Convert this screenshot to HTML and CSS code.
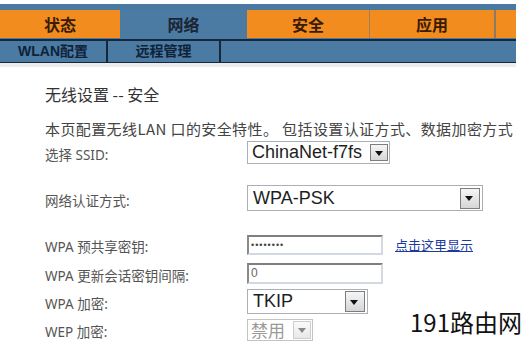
FILE: index.html
```html
<!DOCTYPE html>
<html lang="zh-CN">
<head>
<meta charset="UTF-8" />
<meta name="viewport" content="width=device-width, initial-scale=1" />
<title>无线设置 -- 安全</title>
<link rel="stylesheet" href="styles.css">
</head>
<body>

<div class="nav">
  <div class="tabs">
    <div class="tab">状态</div>
    <div class="tab active">网络</div>
    <div class="tab">安全</div>
    <div class="tab sep">应用</div>
    <div class="tab sep tail"></div>
  </div>
  <div class="subtabs">
    <div class="subtab">WLAN配置</div>
    <div class="subtab wide">远程管理</div>
  </div>
</div>
<div class="shade"></div>

<div class="content">
  <h2 class="title">无线设置 -- 安全</h2>
  <p class="desc">本页配置无线LAN 口的安全特性。 包括设置认证方式、数据加密方式</p>

  <div class="row row-ssid">
    <label class="field-label">选择 SSID:</label>
    <div class="select ssid"><span class="val">ChinaNet-f7fs</span><span class="arrow"></span></div>
  </div>

  <div class="row row-auth">
    <label class="field-label">网络认证方式:</label>
    <div class="select auth"><span class="val">WPA-PSK</span><span class="arrow"></span></div>
  </div>

  <div class="row row-psk">
    <label class="field-label">WPA 预共享密钥:</label>
    <div class="input pass">&bull;&bull;&bull;&bull;&bull;&bull;&bull;&bull;</div>
    <a href="#" class="show-link">点击这里显示</a>
  </div>

  <div class="row row-interval">
    <label class="field-label">WPA 更新会话密钥间隔:</label>
    <div class="input num">0</div>
  </div>

  <div class="row row-tkip">
    <label class="field-label">WPA 加密:</label>
    <div class="select tkip"><span class="val">TKIP</span><span class="arrow"></span></div>
  </div>

  <div class="row row-wep">
    <label class="field-label">WEP 加密:</label>
    <div class="select wep disabled"><span class="val">禁用</span><span class="arrow"></span></div>
  </div>
</div>

<div class="watermark">191路由网</div>

</body>
</html>
```

FILE: styles.css
```css
body {
  margin: 0;
  background: #fff;
  font-family: "Noto Sans", "Noto Sans CJK SC", sans-serif;
  position: relative;
  height: 354px;
  overflow: hidden;
}

/* top navigation */
.nav {
  width: 516px;
  margin-top: 4px;
  background: #4b7ba3;
  border-top: 6px solid #4a79a1;
}
.tabs {
  display: flex;
  height: 28px;
  border-bottom: 1px solid #4b7ba3;
}
.tab {
  width: 120px;
  background: #f28c1e;
  color: #3a1b08;
  font-family: "Noto Sans CJK SC", sans-serif;
  font-weight: bold;
  font-size: 16px;
  line-height: 28px;
  text-align: center;
  box-sizing: border-box;
}
.tab.active {
  width: 127px;
  background: #4b7ba3;
  color: #1b2533;
}
.tab:nth-child(3) { width: 122px; }
.tab.sep {
  width: 125px;
  border-left: 1px solid #a0805a;
}
.tab.tail {
  width: 22px;
  border-left: 2px solid #8a7a66;
}
.subtabs {
  display: flex;
  height: 21px;
  border-top: 2px solid #16273b;
  border-bottom: 1px solid #16273b;
}
.subtab {
  width: 108px;
  border-right: 2px solid #16273b;
  box-sizing: border-box;
  color: #0f2238;
  font-family: "Liberation Sans", "Noto Sans CJK SC", sans-serif;
  font-weight: bold;
  font-size: 14px;
  line-height: 21px;
  text-align: center;
}
.subtab.wide { width: 113px; }
.shade {
  width: 516px;
  height: 4px;
  background: #ececec;
}

/* form */
.content {
  padding: 17px 0 0 45px;
}
.title {
  margin: 0;
  font-family: "Noto Sans CJK SC", sans-serif;
  font-weight: normal;
  font-size: 16px;
  line-height: 20px;
  color: #333;
}
.desc {
  margin: 15px 0 0;
  font-family: "Noto Sans CJK SC", sans-serif;
  font-size: 15px;
  letter-spacing: 0.4px;
  line-height: 20px;
  color: #444;
  white-space: nowrap;
}
.row {
  display: flex;
  align-items: center;
}
.row-ssid { margin-top: 2px; }
.row-auth { margin-top: 21px; }
.row-psk { margin-top: 22px; }
.row-interval { margin-top: 6px; }
.row-tkip { margin-top: 4px; }
.row-wep { margin-top: 4px; }

.field-label {
  width: 202px;
  padding-top: 5px;
  font-size: 13.5px;
  line-height: 18px;
  color: #555;
}

.select {
  display: flex;
  align-items: center;
  justify-content: space-between;
  box-sizing: border-box;
  border: 1px solid #a9b0b8;
  background: #fff;
  padding: 0 1px 0 5px;
  font-family: "Liberation Sans", "Noto Sans CJK SC", sans-serif;
  font-size: 18px;
  color: #1e1e1e;
  white-space: nowrap;
}
.select .arrow {
  position: relative;
  flex-shrink: 0;
  width: 18px;
  box-sizing: border-box;
  border: 1px solid #7d7d7d;
  background: linear-gradient(#f6f6f6, #d6d6d6);
}
.select .arrow::after {
  content: "";
  position: absolute;
  left: 4px;
  top: 50%;
  margin-top: -2px;
  border-left: 4px solid transparent;
  border-right: 4px solid transparent;
  border-top: 5px solid #111;
}
.ssid { width: 143px; height: 23px; padding-left: 4px; }
.ssid .arrow { height: 17px; margin-left: 3px; }
.auth { width: 236px; height: 26px; }
.auth .arrow { width: 20px; height: 21px; margin-right: 1px; }
.tkip { width: 121px; height: 25px; }
.tkip .arrow { width: 20px; height: 21px; margin-right: 1px; }
.wep { width: 66px; height: 22px; padding-left: 3px; }
.wep .arrow { height: 18px; }
.disabled {
  border-color: #c4c4c4;
  color: #9a9a9a;
  font-family: "Noto Sans CJK SC", sans-serif;
  font-size: 17px;
}
.disabled .arrow {
  border-color: #cdcdcd;
  background: linear-gradient(#fafafa, #e8e8e8);
}
.disabled .arrow::after { border-top-color: #888; }

.input {
  width: 136px;
  box-sizing: border-box;
  border-top: 2px solid #7f7f7f;
  border-left: 2px solid #8a8a8a;
  border-right: 2px solid #d3d9e3;
  border-bottom: 2px solid #d3d9e3;
  padding-left: 2px;
  background: #fff;
}
.pass {
  height: 20px;
  font-family: "Liberation Sans", sans-serif;
  font-size: 9px;
  letter-spacing: 1px;
  line-height: 16px;
  color: #444;
}
.num {
  height: 21px;
  font-family: "Liberation Sans", sans-serif;
  font-size: 12px;
  line-height: 17px;
  color: #666;
}
.show-link {
  margin-left: 12px;
  font-family: "Noto Sans CJK SC", sans-serif;
  font-size: 13px;
  line-height: 16px;
  color: #1b3b9e;
}

.watermark {
  position: absolute;
  left: 410px;
  top: 307px;
  font-family: "Noto Sans CJK SC", sans-serif;
  font-size: 24px;
  line-height: 30px;
  color: #111;
}
```
